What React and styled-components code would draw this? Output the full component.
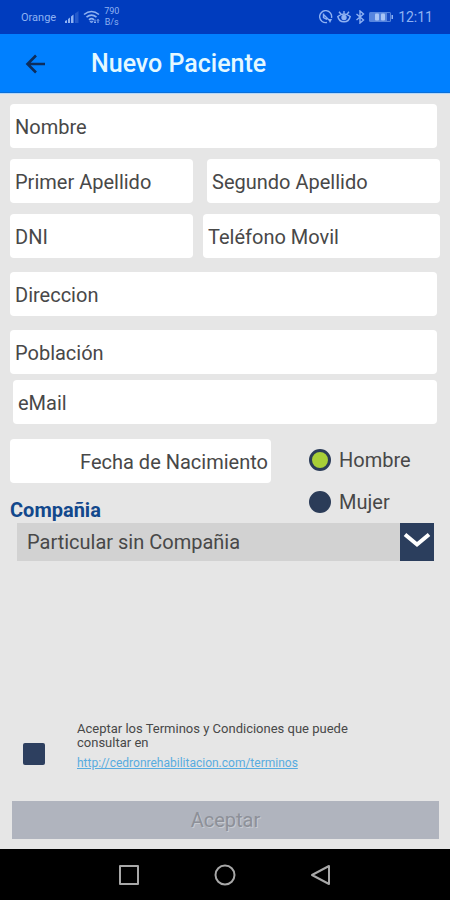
import React, { useState } from "react";
import styled, { createGlobalStyle } from "styled-components";

const GlobalStyle = createGlobalStyle`
  * { box-sizing: border-box; }
  body { margin: 0; background: #e6e6e6; font-family: Roboto, "Noto Sans", sans-serif; }
  button, input, select { font-family: inherit; }
`;

const Screen = styled.div`
  min-height: 100vh;
  display: flex;
  flex-direction: column;
  background: #e6e6e6;
  color: #484848;
`;

const StatusBar = styled.div`
  height: 34px;
  flex: none;
  display: flex;
  align-items: center;
  justify-content: space-between;
  padding: 0 17px 0 21px;
  background: #003cbe;
  color: #8fb2f2;
`;

const StatusGroup = styled.div`
  display: flex;
  align-items: center;
  gap: ${(p) => p.$gap}px;
`;

const Carrier = styled.span`
  font-size: 11px;
  margin-right: 5px;
`;

const Speed = styled.span`
  font-size: 9px;
  line-height: 11px;
  text-align: center;
`;

const Clock = styled.span`
  font-size: 14px;
`;

const AppBar = styled.header`
  height: 59px;
  flex: none;
  display: flex;
  align-items: center;
  gap: 43px;
  padding: 2px 24px 0;
  background: #0080ff;
  border-bottom: 1px solid #0a6fd8;
  box-shadow: 0 1px 0 #b4d8fa;
`;

const BackButton = styled.button`
  display: flex;
  padding: 0;
  border: 0;
  background: none;
  color: #0d2d5c;
`;

const Title = styled.h1`
  margin: 0;
  font-size: 25px;
  line-height: 32px;
  font-weight: 500;
  color: #e4f8ff;
`;

const Form = styled.form`
  flex: 1;
  display: flex;
  flex-direction: column;
  padding: 11px 10px 10px;
`;

const Row = styled.div`
  display: grid;
  grid-template-columns: ${(p) => p.$columns || "1fr"};
  gap: ${(p) => p.$gap || 0}px;
  margin: 0 ${(p) => p.$right || 0}px ${(p) => p.$below}px ${(p) => p.$left || 0}px;
`;

const Field = styled.input`
  width: 100%;
  min-width: 0;
  height: 44px;
  padding: 2px ${(p) => (p.$end ? 3 : 5)}px 0;
  border: 0;
  border-radius: 4px;
  background: #fff;
  color: #484848;
  font-size: 20px;
  text-align: ${(p) => (p.$end ? "right" : "left")};
  &::placeholder { color: #484848; opacity: 1; }
`;

const Details = styled.div`
  display: grid;
  grid-template-columns: 261fr 131px 38fr;
`;

const DateColumn = styled.div`
  display: flex;
  flex-direction: column;
`;

const CompanyLabel = styled.label`
  margin-top: 15px;
  font-size: 20px;
  line-height: 24px;
  font-weight: 700;
  color: #12488c;
`;

const Genders = styled.div`
  display: flex;
  flex-direction: column;
  padding-left: 38px;
`;

const GenderOption = styled.label`
  display: flex;
  align-items: center;
  gap: 8px;
  height: 42px;
  font-size: 20px;
  color: #484848;
`;

const Radio = styled.input`
  appearance: none;
  flex: none;
  width: 22px;
  height: 22px;
  margin: 0;
  border: 3px solid #2b3c58;
  border-radius: 50%;
  background: #2b3c58;
  &:checked { background: #a8cf38; }
`;

const SelectBox = styled.div`
  display: grid;
  height: 38px;
  margin: 0 6px 0 7px;
`;

const Select = styled.select`
  grid-area: 1 / 1;
  appearance: none;
  width: 100%;
  padding: 0 44px 0 10px;
  border: 0;
  border-radius: 0;
  background: #d2d2d2;
  color: #484848;
  font-size: 20px;
`;

const SelectArrow = styled.span`
  grid-area: 1 / 1;
  justify-self: end;
  display: flex;
  align-items: center;
  justify-content: center;
  width: 34px;
  padding-bottom: 4px;
  background: #2b3e5d;
  pointer-events: none;
`;

const Terms = styled.div`
  display: flex;
  align-items: center;
  gap: 32px;
  margin: auto 80px 30px 13px;
`;

const CheckBox = styled.input`
  appearance: none;
  flex: none;
  width: 22px;
  height: 22px;
  margin: 14px 0 0;
  border-radius: 2px;
  background: #2d3f5f;
  &:checked { background: #a8cf38; border: 3px solid #2d3f5f; }
`;

const TermsText = styled.div`
  display: flex;
  flex-direction: column;
  gap: 5px;
  font-size: 12px;
  line-height: 14px;
`;

const TermsLabel = styled.label`
  max-width: 280px;
  font-size: 13px;
`;

const TermsLink = styled.a`
  color: #58ace0;
  line-height: 16px;
`;

const Submit = styled.button`
  height: 38px;
  margin: 0 1px 0 2px;
  padding: 0;
  border: 0;
  background: #b0b4be;
  color: #8d9098;
  font-size: 20px;
  text-shadow: 1px 1px 0 #c8cbd2;
`;

const NavBar = styled.nav`
  height: 51px;
  flex: none;
  display: flex;
  align-items: center;
  justify-content: center;
  gap: 72px;
  background: #000;
`;

const NavButton = styled.button`
  display: flex;
  padding: 0;
  border: 0;
  background: none;
  color: #a8a8a8;
`;

const SignalIcon = () => (
  <svg width="16" height="14" viewBox="0 0 16 14" fill="currentColor" aria-hidden="true">
    <path d="M1 13v-2l2-1v3zM4 13V9l2-1.5V13zM7 13V6.500l2.500-2V13z" />
    <path d="M11 13V3.500L14.500 1v12z" opacity=".25" />
  </svg>
);

const WifiIcon = () => (
  <svg width="18" height="14" viewBox="0 0 18 14" fill="none" stroke="currentColor" strokeWidth="1.600" aria-hidden="true">
    <path d="M1 4.500Q8.500-1.500 16 4.500M3.500 7.200Q8.500 3 13.500 7.200M6 9.800Q8.500 7.600 11 9.800" />
    <path d="M8.500 13L7 11.300h3zM12 9.500v3.500m-1-1l1 1 1-1M15 13V9.500m-1 1l1-1 1 1" strokeWidth="1" />
  </svg>
);

const NoCallIcon = () => (
  <svg width="14" height="14" viewBox="0 0 14 14" fill="none" stroke="currentColor" strokeWidth="1.400" aria-hidden="true">
    <path d="M12.500 8A6 6 0 1 0 8 12.500M4 4l6 6M4.500 3.500v4L8 9.500" />
    <path d="M9 9h4l-2 4z" fill="currentColor" stroke="none" />
  </svg>
);

const EyeIcon = () => (
  <svg width="14" height="12" viewBox="0 0 14 12" fill="none" stroke="currentColor" strokeWidth="1.400" aria-hidden="true">
    <path d="M.8 5.500Q7 .5 13.200 5.500Q12 10.800 7 10.800T.8 5.500zM2 .8l2 2.500M7 0v3M12 .8l-2 2.500" />
    <circle cx="7" cy="6.500" r="2" fill="currentColor" />
  </svg>
);

const BluetoothIcon = () => (
  <svg width="10" height="14" viewBox="0 0 10 14" fill="none" stroke="currentColor" strokeWidth="1.400" aria-hidden="true">
    <path d="M1.500 4l7 6L5 13V1l3.500 3-7 6" />
  </svg>
);

const BatteryIcon = () => (
  <svg width="25" height="12" viewBox="0 0 25 12" aria-hidden="true">
    <rect x="0" y="1" width="22" height="10" rx="1.500" fill="#5685df" />
    <rect x="6" y="2.500" width="4" height="7" rx="1" fill="#a9c5f6" />
    <rect x="12" y="2.500" width="4" height="7" rx="1" fill="#a9c5f6" />
    <path d="M18 2h3v8h-3z" fill="#174bc4" />
    <path d="M22.500 4h1.500v4h-1.500z" fill="#8fb2f2" />
  </svg>
);

const BackArrow = () => (
  <svg width="24" height="24" viewBox="0 0 24 24" fill="none" stroke="currentColor" strokeWidth="2.600" aria-hidden="true">
    <path d="M21 12H4M12 3.500L3.500 12 12 20.500" />
  </svg>
);

const Chevron = () => (
  <svg width="32" height="20" viewBox="0 0 32 20" fill="none" stroke="#fff" strokeWidth="4" aria-hidden="true">
    <path d="M4 4.500l12 10 12-10" />
  </svg>
);

const NavShape = ({ children }) => (
  <svg width="24" height="24" viewBox="0 0 24 24" fill="none" stroke="currentColor" strokeWidth="2" strokeLinejoin="round" aria-hidden="true">
    {children}
  </svg>
);

export default function App() {
  const [gender, setGender] = useState("Hombre");

  return (
    <Screen>
      <GlobalStyle />
      <StatusBar>
        <StatusGroup $gap={3}>
          <Carrier>Orange</Carrier>
          <SignalIcon />
          <WifiIcon />
          <Speed>790<br />B/s</Speed>
        </StatusGroup>
        <StatusGroup $gap={4}>
          <NoCallIcon />
          <EyeIcon />
          <BluetoothIcon />
          <BatteryIcon />
          <Clock>12:11</Clock>
        </StatusGroup>
      </StatusBar>
      <AppBar>
        <BackButton type="button" aria-label="Volver"><BackArrow /></BackButton>
        <Title>Nuevo Paciente</Title>
      </AppBar>
      <Form onSubmit={(e) => e.preventDefault()}>
        <Row $right={3} $below={11}>
          <Field placeholder="Nombre" aria-label="Nombre" />
        </Row>
        <Row $columns="183fr 233fr" $gap={14} $below={11}>
          <Field placeholder="Primer Apellido" aria-label="Primer Apellido" />
          <Field placeholder="Segundo Apellido" aria-label="Segundo Apellido" />
        </Row>
        <Row $columns="183fr 237fr" $gap={10} $below={14}>
          <Field placeholder="DNI" aria-label="DNI" />
          <Field type="tel" placeholder="Teléfono Movil" aria-label="Teléfono Movil" />
        </Row>
        <Row $right={3} $below={14}>
          <Field placeholder="Direccion" aria-label="Direccion" />
        </Row>
        <Row $right={3} $below={6}>
          <Field placeholder="Población" aria-label="Población" />
        </Row>
        <Row $left={3} $right={3} $below={15}>
          <Field type="email" placeholder="eMail" aria-label="eMail" />
        </Row>
        <Details>
          <DateColumn>
            <Row $below={0}>
              <Field $end placeholder="Fecha de Nacimiento" aria-label="Fecha de Nacimiento" />
            </Row>
            <CompanyLabel htmlFor="company">Compañia</CompanyLabel>
          </DateColumn>
          <Genders role="radiogroup" aria-label="Sexo">
            {["Hombre", "Mujer"].map((name) => (
              <GenderOption key={name}>
                <Radio
                  type="radio"
                  name="gender"
                  checked={gender === name}
                  onChange={() => setGender(name)}
                />
                {name}
              </GenderOption>
            ))}
          </Genders>
        </Details>
        <SelectBox>
          <Select id="company">
            <option>Particular sin Compañia</option>
          </Select>
          <SelectArrow><Chevron /></SelectArrow>
        </SelectBox>
        <Terms>
          <CheckBox id="terms" type="checkbox" />
          <TermsText>
            <TermsLabel htmlFor="terms">
              Aceptar los Terminos y Condiciones que puede consultar en
            </TermsLabel>
            <TermsLink href="http://cedronrehabilitacion.com/terminos">
              http://cedronrehabilitacion.com/terminos
            </TermsLink>
          </TermsText>
        </Terms>
        <Submit type="submit" disabled>Aceptar</Submit>
      </Form>
      <NavBar>
        <NavButton type="button" aria-label="Recientes">
          <NavShape><rect x="3" y="3" width="18" height="18" /></NavShape>
        </NavButton>
        <NavButton type="button" aria-label="Inicio">
          <NavShape><circle cx="12" cy="12" r="9.500" /></NavShape>
        </NavButton>
        <NavButton type="button" aria-label="Atrás">
          <NavShape><path d="M20 3v18L3 12z" /></NavShape>
        </NavButton>
      </NavBar>
    </Screen>
  );
}
